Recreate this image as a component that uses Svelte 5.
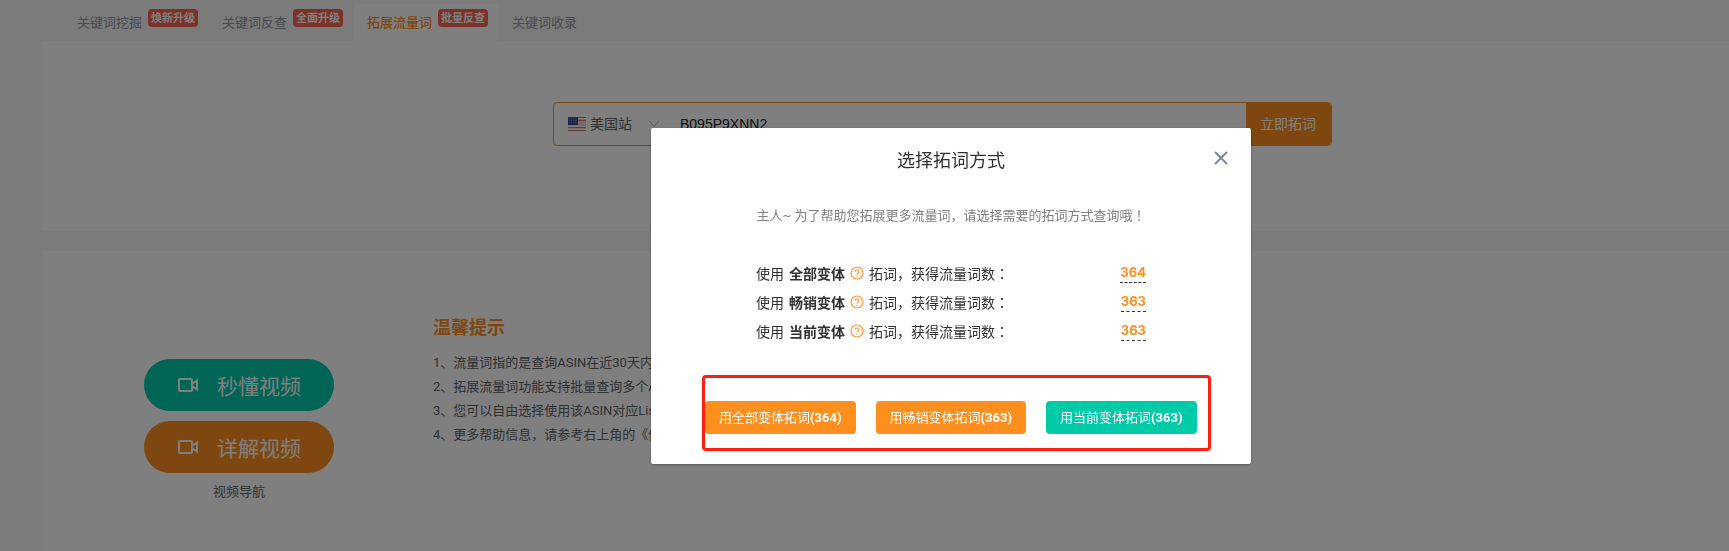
<script>
  const tabs = [
    { name: '关键词挖掘', badge: '焕新升级' },
    { name: '关键词反查', badge: '全面升级' },
    { name: '拓展流量词', badge: '批量反查', active: true },
    { name: '关键词收录' }
  ];
  const videos = [
    { name: '秒懂视频', tone: 'teal' },
    { name: '详解视频', tone: 'orange' }
  ];
  const tips = [
    '1、流量词指的是查询ASIN在近30天内',
    '2、拓展流量词功能支持批量查询多个ASIN',
    '3、您可以自由选择使用该ASIN对应Listing',
    '4、更多帮助信息，请参考右上角的《使用'
  ];
  const modes = [
    { name: '全部变体', count: 364, tone: 'orange' },
    { name: '畅销变体', count: 363, tone: 'orange' },
    { name: '当前变体', count: 363, tone: 'teal' }
  ];
</script>

<div class="page">
  <nav class="tabs">
    {#each tabs as tab}
      <a href="#top" class="tab" class:active={tab.active}>
        <span>{tab.name}</span>
        {#if tab.badge}<span class="badge">{tab.badge}</span>{/if}
      </a>
    {/each}
  </nav>

  <section class="panel search-panel">
    <form class="search">
      <div class="site">
        <svg class="flag" width="18" height="14" viewBox="0 0 18 14" aria-hidden="true">
          <rect width="18" height="14" fill="#f3d4d4" />
          <path d="M0 .5h18M0 3.500h18M0 10.500h18M0 13.500h18" stroke="#d0707c" stroke-width="1" />
          <path d="M0 1.500h18M0 9.500h18M0 12.500h18" stroke="#fff" stroke-width="1" />
          <rect width="10" height="8" fill="#3c4d86" />
          <path d="M1 1.500h8M1 3.500h8M1 5.500h8" stroke="#6c7bab" stroke-width="1" stroke-dasharray="1 1" />
        </svg>
        <select aria-label="站点"><option>美国站</option></select>
        <svg class="chevron" width="12" height="8" viewBox="0 0 12 8" fill="none" stroke="#b0b3ba" aria-hidden="true">
          <path d="M1 1l5 5.500L11 1" />
        </svg>
      </div>
      <input type="text" aria-label="ASIN" value="B095P9XNN2" />
      <button type="button" class="orange">立即拓词</button>
    </form>
  </section>

  <section class="panel info">
    <div class="videos">
      {#each videos as video}
        <button type="button" class="video {video.tone}">
          <svg width="20" height="14" viewBox="0 0 20 14" fill="none" stroke="#fff" stroke-width="2" aria-hidden="true">
            <rect x="1" y="1" width="13" height="12" rx="1" />
            <path d="M14 6l5-3.500v9L14 8" />
          </svg>
          <span>{video.name}</span>
        </button>
      {/each}
      <p>视频导航</p>
    </div>
    <div class="tips">
      <h2>温馨提示</h2>
      {#each tips as tip}<p>{tip}</p>{/each}
    </div>
  </section>
</div>

<div class="mask">
  <div class="dialog" role="dialog" aria-labelledby="dialog-title">
    <button type="button" class="close" aria-label="关闭">
      <svg width="14" height="14" viewBox="0 0 14 14" fill="none" stroke="#7d8896" stroke-width="2" stroke-linecap="round">
        <path d="M1.500 1.500l11 11M12.500 1.500l-11 11" />
      </svg>
    </button>
    <h1 id="dialog-title">选择拓词方式</h1>
    <p class="lead">主人~ 为了帮助您拓展更多流量词，请选择需要的拓词方式查询哦<span class="mark">！</span></p>
    <ul class="modes">
      {#each modes as mode}
        <li>
          <span>使用</span>
          <strong>{mode.name}</strong>
          <svg width="14" height="14" viewBox="0 0 14 14" fill="none" stroke="#ff9a3c" stroke-width="1.200" aria-hidden="true">
            <circle cx="7" cy="7" r="6" />
            <path d="M5.200 5.800a1.800 1.800 0 1 1 2.700 1.500c-.6.350-.9.600-.9 1.300M7 9.600v1.100" />
          </svg>
          <span>拓词，获得流量词数<span class="mark">：</span></span>
          <a href="#top">{mode.count}</a>
        </li>
      {/each}
    </ul>
    <div class="actions">
      {#each modes as mode}
        <button type="button" class={mode.tone}>用{mode.name}拓词<b>({mode.count})</b></button>
      {/each}
    </div>
  </div>
</div>

<style>
  :global(body) {
    background: #f6f6f6;
    font-family: Roboto, 'Noto Sans CJK SC', sans-serif;
    font-size: 13px;
    color: #606266;
    overflow: hidden;
  }
  h1, h2, p, ul {
    margin: 0;
    padding: 0;
  }
  button {
    border: 0;
    padding: 0;
    font: inherit;
    color: #fff;
    cursor: pointer;
  }
  a {
    text-decoration: none;
    color: inherit;
  }
  .orange { background: #fd8f1e; }
  .teal { background: #00cba9; }
  .mark {
    font-family: 'Noto Sans CJK TC', sans-serif;
    line-height: 1;
  }
  .page {
    box-sizing: border-box;
    height: 100vh;
    padding: 4px 0 0 43px;
    display: flex;
    flex-direction: column;
    overflow: hidden;
  }
  .tabs {
    display: flex;
    padding-left: 21px;
  }
  .tab {
    display: flex;
    gap: 6px;
    height: 37px;
    padding: 0 11px 0 13px;
    line-height: 38px;
    color: #8f949c;
    border-radius: 4px 4px 0 0;
  }
  .tab.active {
    background: #fff;
    color: #fd8f1e;
    font-weight: 500;
  }
  .badge {
    height: 18px;
    margin-top: 5px;
    padding: 0 3px;
    border-radius: 4px;
    background: #fa6450;
    color: #fff;
    font-size: 11px;
    font-weight: 700;
    line-height: 20px;
  }
  .panel {
    background: #fff;
  }
  .search-panel {
    display: flex;
    justify-content: center;
    padding: 61px 0 85px 113px;
    margin-bottom: 20px;
  }
  .search {
    box-sizing: border-box;
    display: flex;
    flex: 0 1 779px;
    height: 44px;
    border: 1px solid #fd8f1e;
    border-radius: 4px;
    overflow: hidden;
    font-size: 14px;
  }
  .site {
    display: flex;
    align-items: center;
    padding: 0 20px 0 14px;
    gap: 4px;
  }
  .site select {
    appearance: none;
    width: 54px;
    border: 0;
    padding: 0;
    background: none;
    font: inherit;
    color: #606266;
  }
  .search input {
    flex: 1;
    min-width: 0;
    border: 0;
    padding: 0;
    background: none;
    font: 14px 'Liberation Sans', sans-serif;
    color: #222;
  }
  .search button {
    padding: 0 15px 2px 14px;
  }
  .info {
    flex: 1;
    display: flex;
    gap: 99px;
    padding: 0 101px;
  }
  .videos {
    display: flex;
    flex-direction: column;
    gap: 10px;
    width: 190px;
    padding-top: 108px;
    text-align: center;
  }
  .video {
    display: flex;
    align-items: center;
    gap: 19px;
    height: 52px;
    padding-left: 34px;
    border-radius: 26px;
    font-size: 21px;
  }
  .videos p {
    line-height: 18px;
  }
  .tips {
    padding-top: 63px;
    white-space: nowrap;
  }
  .tips h2 {
    margin-bottom: 9px;
    font-size: 18px;
    line-height: 28px;
    color: #fd8f1e;
  }
  .tips p {
    line-height: 24px;
  }
  .mask {
    position: fixed;
    inset: 0;
    display: flex;
    align-items: flex-start;
    justify-content: center;
    padding: 128px 0 0 173px;
    background: rgba(0, 0, 0, 0.5);
  }
  .dialog {
    position: relative;
    box-sizing: border-box;
    width: 600px;
    padding: 20px 40px 13px 51px;
    border-radius: 2px;
    background: #fff;
    box-shadow: 0 1px 3px rgba(0, 0, 0, 0.3);
  }
  .close {
    position: absolute;
    top: 23px;
    right: 23px;
    display: flex;
    background: none;
  }
  h1 {
    margin-right: 11px;
    font-size: 18px;
    font-weight: 400;
    line-height: 26px;
    text-align: center;
    color: #303133;
  }
  .lead {
    margin: 32px 11px 32px 0;
    line-height: 20px;
    text-align: center;
    color: #808080;
  }
  .modes {
    list-style: none;
    padding: 0 65px 0 54px;
    font-size: 14px;
    color: #303133;
  }
  .modes li {
    display: flex;
    align-items: center;
    gap: 5px;
    height: 29px;
  }
  .modes a {
    margin-left: auto;
    border-bottom: 1px dashed #303133;
    color: #fd8f1e;
    font: 700 13px/20px Inter, sans-serif;
  }
  .actions {
    display: flex;
    gap: 20px;
    margin-top: 30px;
    padding: 23px 0 14px;
    border: 3px solid #ff1e0f;
    border-radius: 4px;
  }
  .actions button {
    height: 33px;
    padding: 0 14px 2px;
    border-radius: 4px;
    white-space: nowrap;
  }
</style>
